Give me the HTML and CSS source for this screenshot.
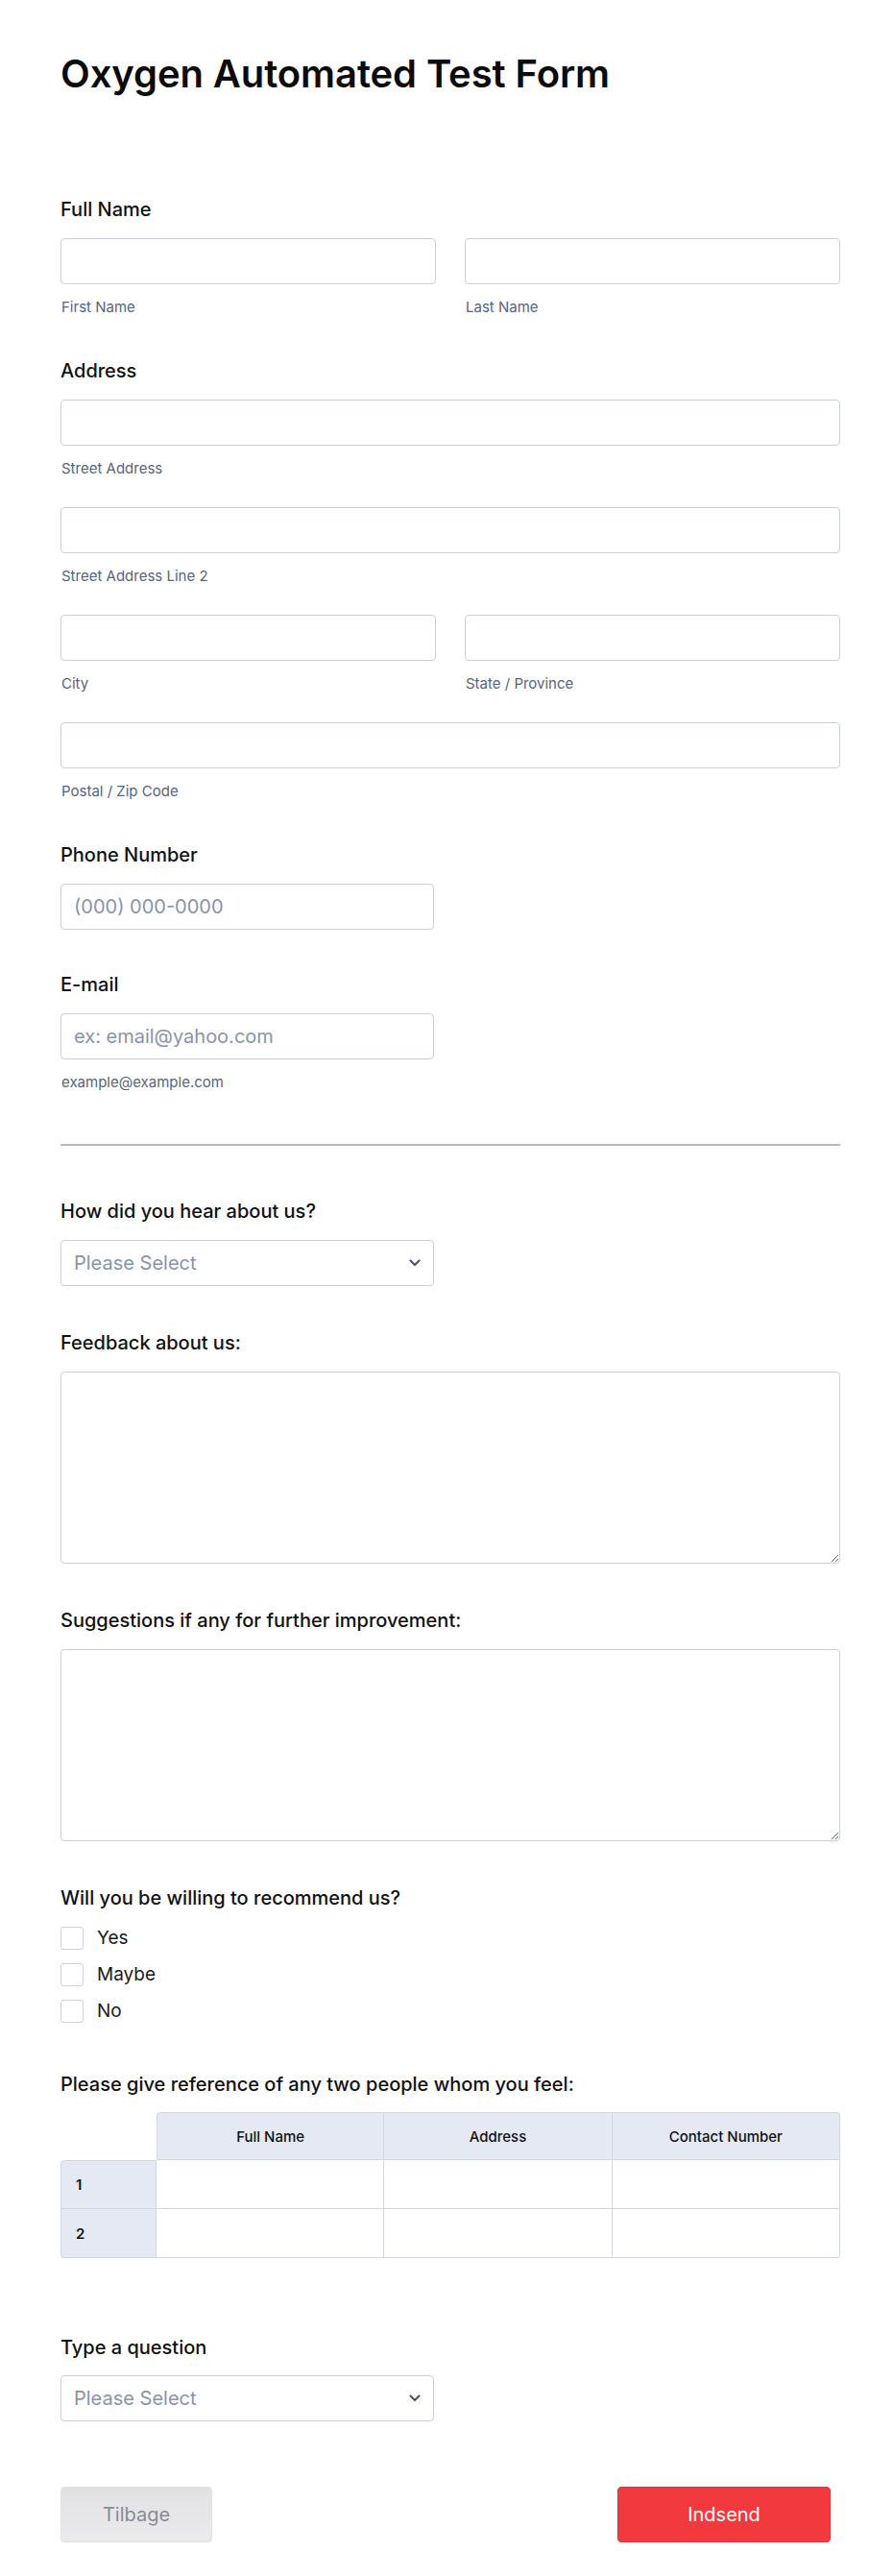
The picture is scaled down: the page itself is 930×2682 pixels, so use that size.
FILE: index.html
```html
<!DOCTYPE html>
<html lang="en">
<head>
<meta charset="utf-8">
<title>Oxygen Automated Test Form</title>
<link rel="stylesheet" href="styles.css">
</head>
<body>
<form class="form">
  <header class="form-header">
    <h1 class="title">Oxygen Automated Test Form</h1>
  </header>

  <div class="field field-first">
    <label class="label">Full Name</label>
    <div class="row-two">
      <div class="sub">
        <input class="input" type="text">
        <span class="sublabel">First Name</span>
      </div>
      <div class="sub">
        <input class="input" type="text">
        <span class="sublabel">Last Name</span>
      </div>
    </div>
  </div>

  <div class="field">
    <label class="label">Address</label>
    <div class="sub sub-stack">
      <input class="input" type="text">
      <span class="sublabel">Street Address</span>
    </div>
    <div class="sub sub-stack">
      <input class="input" type="text">
      <span class="sublabel">Street Address Line 2</span>
    </div>
    <div class="row-two sub-stack">
      <div class="sub">
        <input class="input" type="text">
        <span class="sublabel">City</span>
      </div>
      <div class="sub">
        <input class="input" type="text">
        <span class="sublabel">State / Province</span>
      </div>
    </div>
    <div class="sub">
      <input class="input" type="text">
      <span class="sublabel">Postal / Zip Code</span>
    </div>
  </div>

  <div class="field">
    <label class="label">Phone Number</label>
    <input class="input input-short" type="tel" placeholder="(000) 000-0000">
  </div>

  <div class="field">
    <label class="label">E-mail</label>
    <div class="sub">
      <input class="input input-short" type="email" placeholder="ex: email@yahoo.com">
      <span class="sublabel">example@example.com</span>
    </div>
  </div>

  <hr class="divider">

  <div class="field field-after-divider">
    <label class="label">How did you hear about us?</label>
    <div class="select">
      <span class="select-text">Please Select</span>
      <svg class="chevron" width="12" height="8" viewBox="0 0 12 8" aria-hidden="true"><polyline points="1.5,1.5 6,6 10.5,1.5" fill="none" stroke="currentColor" stroke-width="2.2" stroke-linecap="round" stroke-linejoin="round"/></svg>
    </div>
  </div>

  <div class="field field-lower">
    <label class="label">Feedback about us:</label>
    <textarea class="textarea"></textarea>
  </div>

  <div class="field field-lower">
    <label class="label">Suggestions if any for further improvement:</label>
    <textarea class="textarea"></textarea>
  </div>

  <div class="field field-lower">
    <label class="label">Will you be willing to recommend us?</label>
    <div class="options">
      <div class="option"><span class="checkbox"></span><span class="option-text">Yes</span></div>
      <div class="option"><span class="checkbox"></span><span class="option-text">Maybe</span></div>
      <div class="option"><span class="checkbox"></span><span class="option-text">No</span></div>
    </div>
  </div>

  <div class="field field-lower">
    <label class="label label-tight">Please give reference of any two people whom you feel:</label>
    <table class="matrix">
      <thead>
        <tr>
          <th class="corner"></th>
          <th class="col-head">Full Name</th>
          <th class="col-head">Address</th>
          <th class="col-head">Contact Number</th>
        </tr>
      </thead>
      <tbody>
        <tr>
          <th class="row-head">1</th>
          <td></td><td></td><td></td>
        </tr>
        <tr>
          <th class="row-head">2</th>
          <td></td><td></td><td></td>
        </tr>
      </tbody>
    </table>
  </div>

  <div class="field field-lower">
    <label class="label label-tight">Type a question</label>
    <div class="select">
      <span class="select-text">Please Select</span>
      <svg class="chevron" width="12" height="8" viewBox="0 0 12 8" aria-hidden="true"><polyline points="1.5,1.5 6,6 10.5,1.5" fill="none" stroke="currentColor" stroke-width="2.2" stroke-linecap="round" stroke-linejoin="round"/></svg>
    </div>
  </div>

  <div class="buttons">
    <button type="button" class="btn btn-back">Tilbage</button>
    <button type="button" class="btn btn-submit">Indsend</button>
  </div>
</form>
</body>
</html>
```

FILE: styles.css
```css
* {
  box-sizing: border-box;
}

html, body {
  margin: 0;
  padding: 0;
  background: #ffffff;
}

body {
  font-family: "Inter", "Noto Sans", sans-serif;
  color: #111111;
}

.form {
  width: 875px;
  padding: 53px 0 35px 63px;
}

.form-header {
  margin: 0 0 105px;
}

.title {
  margin: 0;
  font-size: 40px;
  line-height: 48px;
  font-weight: 600;
  color: #0b0b0b;
  letter-spacing: -0.1px;
}

.field {
  margin-top: 45px;
  display: flex;
  flex-direction: column;
  align-items: flex-start;
}

.field-first {
  margin-top: 0;
}

.field-after-divider {
  margin-top: 56px;
}

.field-lower {
  margin-top: 47px;
}

.label {
  display: block;
  font-size: 20px;
  line-height: 24px;
  font-weight: 500;
  color: #111111;
  margin-bottom: 18px;
}

.label-tight {
  margin-bottom: 17px;
}

.row-two {
  display: flex;
  gap: 30px;
  width: 812px;
}

.row-two .sub {
  flex: 1 1 0;
}

.sub {
  display: flex;
  flex-direction: column;
  width: 100%;
}

.field > .sub {
  width: 812px;
}

.sub-stack {
  margin-bottom: 31px;
}

.input {
  display: block;
  width: 100%;
  height: 48px;
  margin: 0;
  padding: 0 13px;
  border: 1px solid #c9cfdc;
  border-radius: 4px;
  background: #ffffff;
  font-family: "Inter", "Noto Sans", sans-serif;
  font-size: 20px;
  color: #2c3345;
  outline: none;
}

.input::placeholder {
  color: #8894ab;
  opacity: 1;
}

.input-short {
  width: 389px;
}

.sublabel {
  display: block;
  margin-top: 15px;
  font-size: 15px;
  line-height: 18px;
  color: #57647e;
  padding-left: 1px;
}

.divider {
  margin: 55px 0 0;
  width: 812px;
  height: 2px;
  border: 0;
  background: #b9b9b9;
}

.select {
  width: 389px;
  height: 48px;
  padding: 0 13px;
  border: 1px solid #c9cfdc;
  border-radius: 4px;
  background: #ffffff;
  display: flex;
  align-items: center;
  justify-content: space-between;
}

.select-text {
  font-size: 20px;
  color: #8894ab;
}

.chevron {
  color: #4f596d;
  display: block;
}

.textarea {
  display: block;
  width: 812px;
  height: 200px;
  margin: 0;
  padding: 10px 13px;
  border: 1px solid #c9cfdc;
  border-radius: 4px;
  background: #ffffff;
  font-family: "Inter", "Noto Sans", sans-serif;
  font-size: 20px;
  resize: both;
  outline: none;
}

.options {
  display: flex;
  flex-direction: column;
  gap: 14px;
  padding-bottom: 5px;
}

.option {
  display: flex;
  align-items: center;
  height: 24px;
  gap: 14px;
}

.checkbox {
  width: 24px;
  height: 24px;
  border: 1px solid #cdd2dd;
  border-radius: 3px;
  background: #ffffff;
  flex: none;
}

.option-text {
  font-size: 19px;
  line-height: 24px;
  color: #1a1a1a;
}

.matrix {
  width: 812px;
  border-collapse: separate;
  border-spacing: 0;
  table-layout: fixed;
  margin-bottom: 34px;
  font-family: "Inter", "Noto Sans", sans-serif;
}

.matrix th,
.matrix td {
  padding: 0;
  height: 50px;
}

.matrix .corner {
  width: 100px;
  background: #ffffff;
  border: 0;
}

.matrix .col-head {
  background: #e4e9f3;
  border-top: 1px solid #d1d6e1;
  border-right: 1px solid #d1d6e1;
  border-bottom: 1px solid #d1d6e1;
  font-size: 15px;
  font-weight: 500;
  color: #111111;
  text-align: center;
}

.matrix .col-head:nth-child(2) {
  border-left: 1px solid #d1d6e1;
  border-top-left-radius: 4px;
}

.matrix .col-head:last-child {
  border-top-right-radius: 4px;
}

.matrix .row-head {
  background: #e4e9f3;
  border-left: 1px solid #d1d6e1;
  border-right: 1px solid #d1d6e1;
  border-bottom: 1px solid #d1d6e1;
  font-size: 15px;
  font-weight: 600;
  color: #111111;
  text-align: left;
  padding-left: 15px;
  height: 51px;
}

.matrix tbody tr:first-child .row-head {
  border-top: 1px solid #d1d6e1;
  border-top-left-radius: 4px;
}

.matrix tbody tr:last-child .row-head {
  border-bottom-left-radius: 4px;
}

.matrix td {
  background: #ffffff;
  border-right: 1px solid #d1d6e1;
  border-bottom: 1px solid #d1d6e1;
}

.matrix tbody tr:last-child td:last-child {
  border-bottom-right-radius: 4px;
}

.buttons {
  margin-top: 68px;
  width: 812px;
  display: flex;
  justify-content: space-between;
  align-items: center;
}

.btn {
  height: 58px;
  border-radius: 4px;
  font-family: "Inter", "Noto Sans", sans-serif;
  font-size: 20px;
  font-weight: 400;
  cursor: pointer;
}

.btn-back {
  width: 158px;
  border: 1px solid #e2e2e4;
  background: linear-gradient(#e1e1e4, #ebebed);
  color: #8a8b96;
}

.btn-submit {
  width: 222px;
  margin-right: 10px;
  border: 1px solid #d9363b;
  background: #f2393e;
  color: #ffffff;
}
```
